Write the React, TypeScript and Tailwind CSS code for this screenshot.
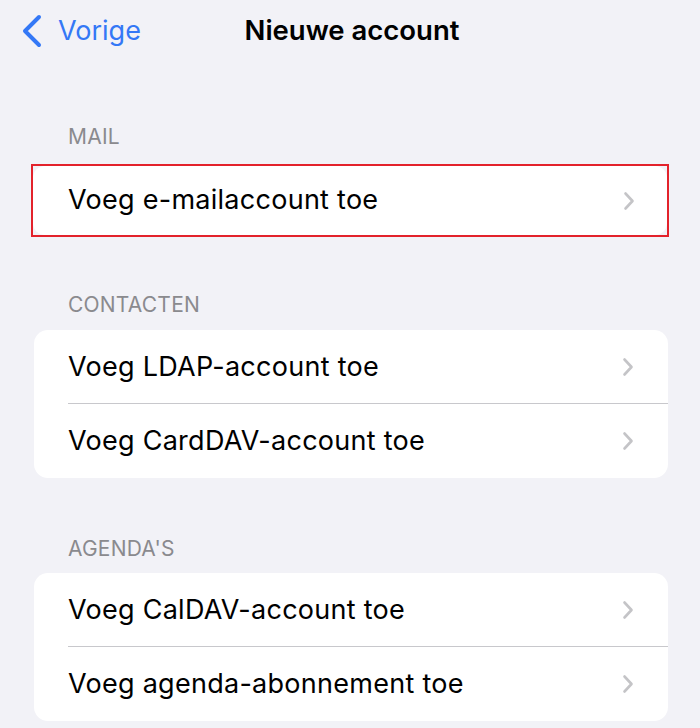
import React from "react";

const Chevron = () => (
  <svg width="12" height="20" viewBox="0 0 12 20" className="shrink-0">
    <path d="M2.5 2.5 L9.5 10 L2.5 17.5" fill="none" stroke="#c4c4c7" strokeWidth="2.6" strokeLinecap="round" strokeLinejoin="round" />
  </svg>
);

const BackChevron = () => (
  <svg width="22" height="34" viewBox="0 0 22 34">
    <path d="M18 3 L4 17 L18 31" fill="none" stroke="#3478f6" strokeWidth="4" strokeLinecap="round" strokeLinejoin="round" />
  </svg>
);

const Row = ({ label, divider }: { label: string; divider?: boolean }) => (
  <div className="relative flex h-[74px] items-center pl-[34px] pr-[34px]">
    <span className="flex-1 pt-[1px] text-[27px] tracking-[0.01em] text-black">{label}</span>
    <Chevron />
    {divider && <div className="absolute bottom-0 left-[34px] right-0 h-px bg-[#c8c8cc]" />}
  </div>
);

const Label = ({ text }: { text: string }) => (
  <div className="px-[68px] text-[21px] leading-[24px] tracking-[0.01em] text-[#8a8a8e]">{text}</div>
);

export default function App() {
  return (
    <div
      className="h-[728px] w-[700px] overflow-hidden bg-[#f2f2f7]"
      style={{ fontFamily: "Inter, 'Liberation Sans', sans-serif" }}
    >
      <div className="grid h-[62px] grid-cols-[1fr_auto_1fr] items-center">
        <div className="flex items-center gap-[15px] pl-[21px]">
          <BackChevron />
          <span className="text-[27px] text-[#3478f6]">Vorige</span>
        </div>
        <div className="pl-[4px] text-[27.5px] font-semibold text-black">Nieuwe account</div>
        <div />
      </div>

      <div className="mt-[63px]">
        <Label text="MAIL" />
        <div className="ml-[31px] mr-[31px] mt-[15px] h-[73px] border-2 border-[#e3222b] bg-[#f2f2f7]">
          <div className="flex h-full items-center rounded-[12px] bg-white pl-[35px] pr-[32px]">
            <span className="flex-1 text-[27px] tracking-[0.01em] text-black">Voeg e-mailaccount toe</span>
            <Chevron />
          </div>
        </div>
      </div>

      <div className="mt-[56px]">
        <Label text="CONTACTEN" />
        <div className="ml-[34px] mr-[32px] mt-[13px] overflow-hidden rounded-[14px] bg-white">
          <Row label="Voeg LDAP-account toe" divider />
          <Row label="Voeg CardDAV-account toe" />
        </div>
      </div>

      <div className="mt-[59px]">
        <Label text="AGENDA'S" />
        <div className="ml-[34px] mr-[32px] mt-[12px] overflow-hidden rounded-[14px] bg-white">
          <Row label="Voeg CalDAV-account toe" divider />
          <Row label="Voeg agenda-abonnement toe" />
        </div>
      </div>
    </div>
  );
}
